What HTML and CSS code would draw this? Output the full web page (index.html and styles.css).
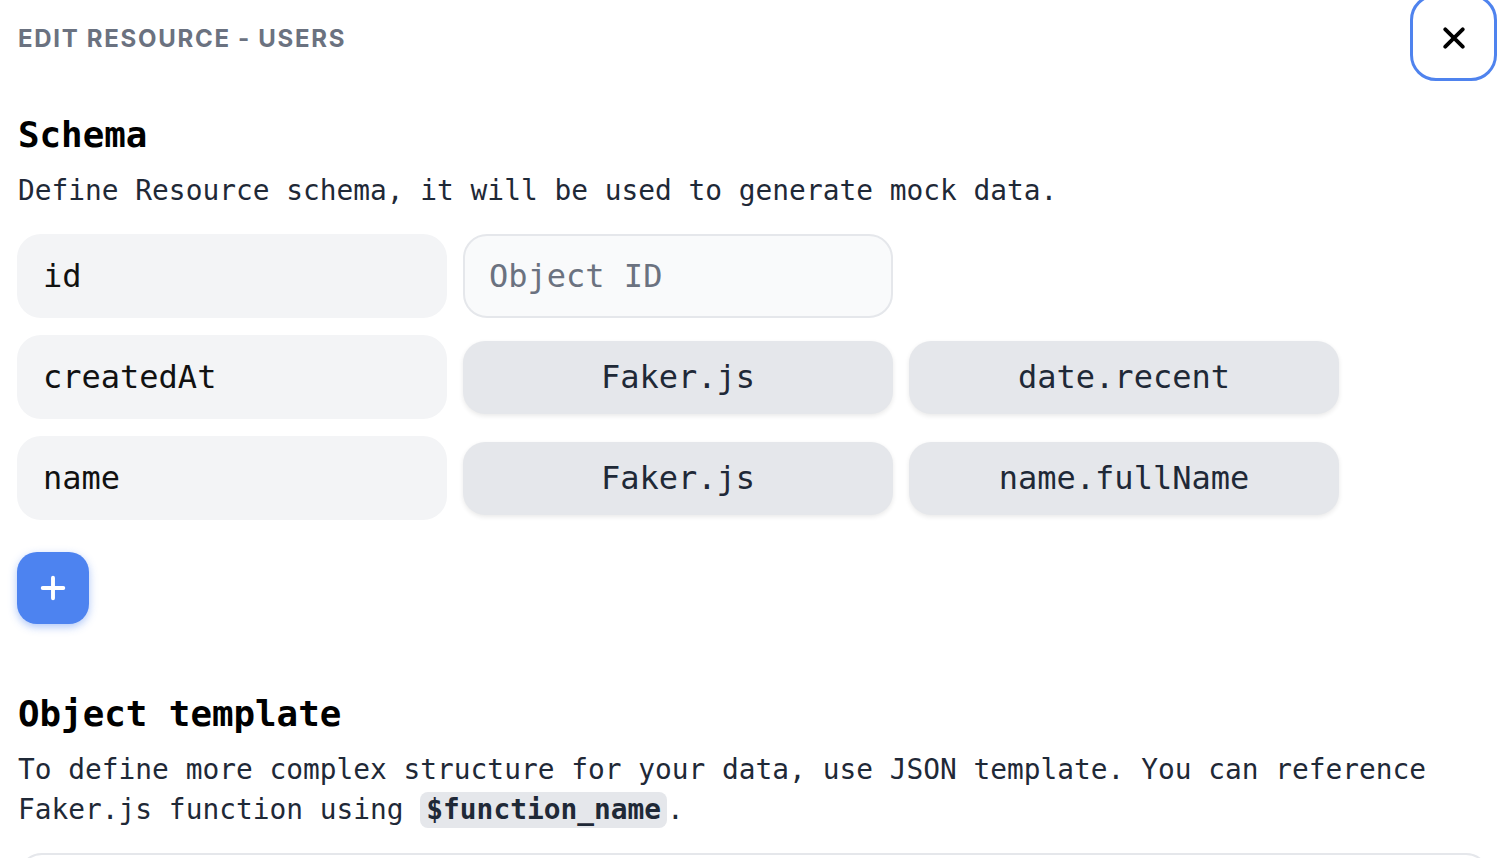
FILE: index.html
```html
<!DOCTYPE html>
<html lang="en">
<head>
<meta charset="utf-8">
<title>Edit resource - users</title>
<link rel="stylesheet" href="styles.css">
</head>
<body>
<div class="page">
  <header class="top">
    <h1 class="title">Edit resource - users</h1>
    <button class="close" aria-label="Close">
      <svg viewBox="0 0 24 24" width="24" height="24"><path d="M2.5 2.5 L21.5 21.5 M21.5 2.5 L2.5 21.5" stroke="#000" stroke-width="4.2" stroke-linecap="round" fill="none"/></svg>
    </button>
  </header>

  <section class="schema">
    <h2 class="heading">Schema</h2>
    <p class="desc">Define Resource schema, it will be used to generate mock data.</p>
    <div class="rows">
      <div class="key">id</div>
      <input class="text-input" placeholder="Object ID">
      <div class="empty"></div>

      <div class="key">createdAt</div>
      <button class="pick">Faker.js</button>
      <button class="pick">date.recent</button>

      <div class="key">name</div>
      <button class="pick">Faker.js</button>
      <button class="pick">name.fullName</button>
    </div>
    <button class="add" aria-label="Add field">
      <svg viewBox="0 0 24 24" width="26" height="26"><path d="M12 2.5 V21.5 M2.5 12 H21.5" stroke="#fff" stroke-width="3.6" stroke-linecap="round" fill="none"/></svg>
    </button>
  </section>

  <section class="template">
    <h2 class="heading">Object template</h2>
    <p class="desc">To define more complex structure for your data, use JSON template. You can reference Faker.js function using <code class="chip">$function_name</code>.</p>
  </section>

  <div class="editor"></div>
</div>
</body>
</html>
```

FILE: styles.css
```css
* { box-sizing: border-box; }

html, body {
  margin: 0;
  padding: 0;
  background: #ffffff;
  overflow: hidden;
  height: 100%;
}

body {
  font-family: "DejaVu Sans Mono", "Liberation Mono", monospace;
  color: #111827;
}

.page {
  position: relative;
  padding: 0 18px 0 17px;
}

.top {
  padding-top: 23px;
}

.title {
  margin: 0 0 0 1px;
  font-family: Inter, "Liberation Sans", sans-serif;
  font-size: 24px;
  line-height: 32px;
  font-weight: 700;
  letter-spacing: 1.7px;
  text-transform: uppercase;
  color: #6b7280;
}

.close {
  position: absolute;
  top: -6px;
  right: 11px;
  width: 87px;
  height: 87px;
  border: 3px solid #4f83ee;
  border-radius: 26px;
  background: #fff;
  display: flex;
  align-items: center;
  justify-content: center;
  padding: 1px 0 0 0;
}

.close svg { width: 22px; height: 22px; }

.heading {
  margin: 0 0 0 1px;
  font-size: 35.8px;
  line-height: 44px;
  font-weight: 700;
  color: #000;
}

.schema .heading { margin-top: 58px; }

.desc {
  margin: 14px 0 0 1px;
  font-size: 27.85px;
  line-height: 40px;
  color: #1f2937;
}

.rows {
  margin-top: 23px;
  display: grid;
  grid-template-columns: repeat(3, 430px);
  grid-auto-rows: 84px;
  column-gap: 16px;
  row-gap: 17px;
  align-items: center;
}

.key {
  height: 84px;
  border-radius: 24px;
  background: #f3f4f6;
  padding: 0 26px;
  display: flex;
  align-items: center;
  font-size: 32px;
  color: #111;
}

.text-input {
  height: 84px;
  width: 100%;
  border: 2px solid #e5e7eb;
  border-radius: 24px;
  background: #f9fafb;
  padding: 0 24px;
  font-family: inherit;
  font-size: 32px;
  color: #111;
  outline: none;
}

.text-input::placeholder { color: #6b7280; }

.pick {
  height: 73px;
  width: 100%;
  border: none;
  border-radius: 22px;
  background: #e5e7eb;
  font-family: inherit;
  font-size: 32px;
  color: #1f2937;
  box-shadow: 0 2px 5px rgba(0, 0, 0, 0.09);
  padding: 0;
}

.add {
  margin-top: 32px;
  width: 72px;
  height: 72px;
  border: none;
  border-radius: 20px;
  background: #4d83f0;
  box-shadow: 0 3px 8px rgba(77, 131, 240, 0.45);
  display: flex;
  align-items: center;
  justify-content: center;
  padding: 0;
}

.template .heading { margin-top: 68px; }

.chip {
  display: inline-block;
  font-family: inherit;
  font-size: 27.85px;
  line-height: 36px;
  font-weight: 700;
  background: #e5e7eb;
  color: #1f2937;
  border-radius: 8px;
  padding: 0 6px;
}

.editor {
  margin-top: 23px;
  margin-left: 1px;
  height: 200px;
  border: 2px solid #e5e7eb;
  border-radius: 24px;
}
```
